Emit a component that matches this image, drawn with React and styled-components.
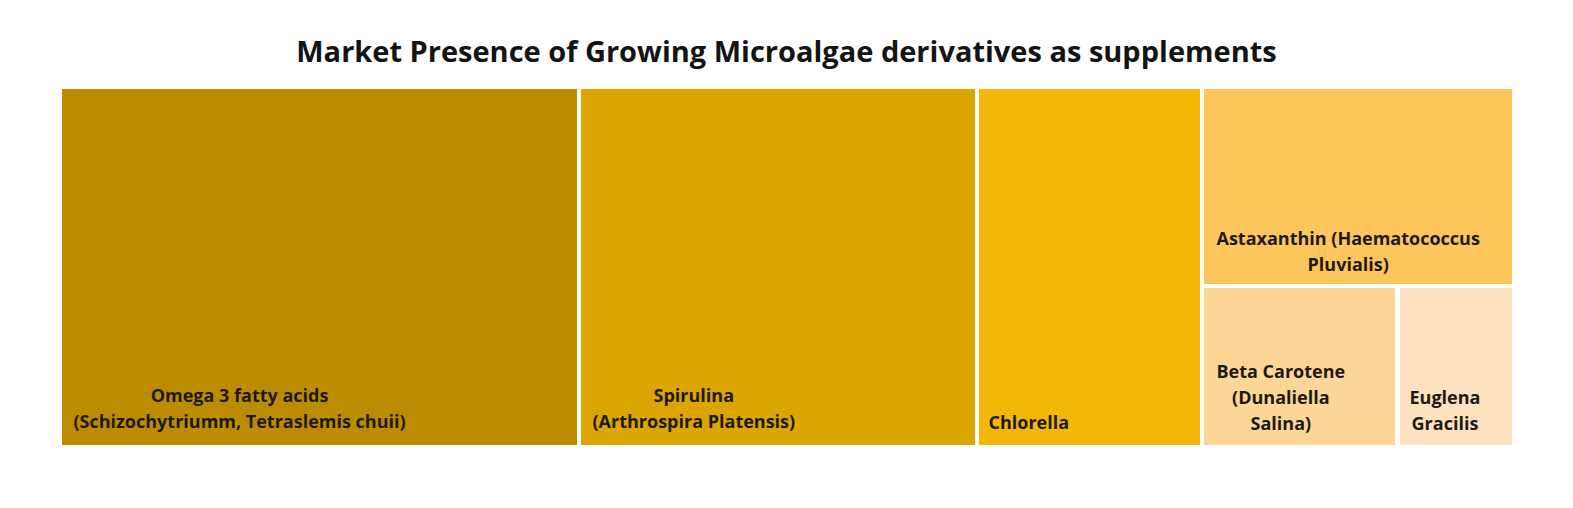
import styled, { createGlobalStyle } from "styled-components"

const Global = createGlobalStyle`
body {
  margin: 0;
  background: #fff;
  font-family: "Open Sans", Lato, sans-serif;
}
`
const Page = styled.div`
width: 1573px;
height: 508px;
padding-top: 34px;
box-sizing: border-box;
display: flex;
flex-direction: column;
align-items: center;
`
const Title = styled.h1`
margin: 0;
font-size: 29px;
line-height: 34px;
font-weight: 700;
color: #141414;
`
const Map = styled.div`
display: flex;
gap: 4px;
height: 356px;
margin-top: 21px;
`
const Stack = styled.div`
display: flex;
flex-direction: column;
flex-shrink: 0;
gap: 4px;
width: ${p => p.$w}px;
`
const Row = styled.div`
display: flex;
gap: 5px;
height: ${p => p.$h}px;
`
const Tile = styled.div`
display: flex;
flex-direction: column;
justify-content: flex-end;
align-items: flex-start;
box-sizing: border-box;
width: ${p => p.$w ? `${p.$w}px` : 'auto'};
height: ${p => p.$h ? `${p.$h}px` : 'auto'};
flex-shrink: 0;
padding: 0 0 ${p => p.$pb || 9}px ${p => p.$pl || 12}px;
background: ${p => p.$bg};
`
const Label = styled.div`
text-align: center;
font-size: 18px;
line-height: 26px;
font-weight: 700;
color: #1e1a12;
white-space: nowrap;
`

const App = () => {
  return (
    <>
      <Global />
      <Page>
        <Title>Market Presence of Growing Microalgae derivatives as supplements</Title>
        <Map>
          <Tile $w={515} $bg="#bc8c00" $pb={11}>
            <Label>Omega 3 fatty acids<br />(Schizochytriumm, Tetraslemis chuii)</Label>
          </Tile>
          <Tile $w={394} $bg="#dba502" $pb={11}>
            <Label>Spirulina<br />(Arthrospira Platensis)</Label>
          </Tile>
          <Tile $w={221} $bg="#f2b707" $pl={10} $pb={10}>
            <Label>Chlorella</Label>
          </Tile>
          <Stack $w={308}>
            <Tile $h={195} $bg="#fdc55b" $pl={13} $pb={7}>
              <Label>Astaxanthin (Haematococcus<br />Pluvialis)</Label>
            </Tile>
            <Row $h={157}>
              <Tile $w={191} $bg="#fcd697" $pl={13}>
                <Label>Beta Carotene<br />(Dunaliella<br />Salina)</Label>
              </Tile>
              <Tile $w={112} $bg="#fde2bf" $pl={10}>
                <Label>Euglena<br />Gracilis</Label>
              </Tile>
            </Row>
          </Stack>
        </Map>
      </Page>
    </>
  )
}
export default App
